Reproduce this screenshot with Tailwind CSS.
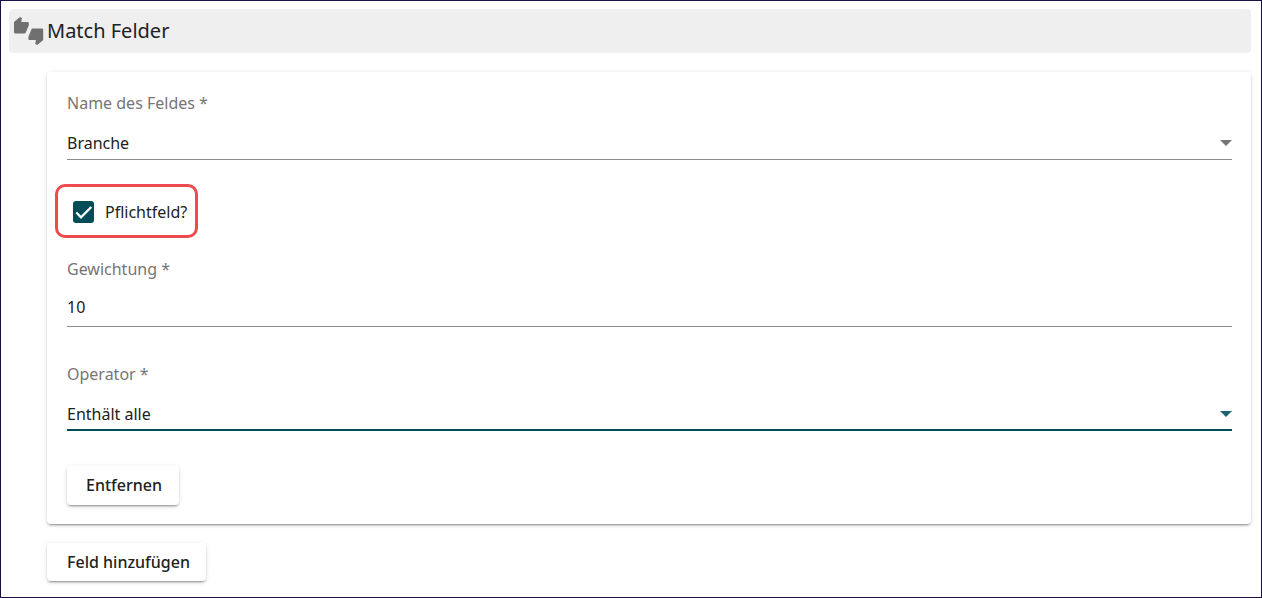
<!DOCTYPE html>
<html lang="de">
<head>
    <meta charset="UTF-8">
    <meta name="viewport" content="width=device-width, initial-scale=1.0">
    <title>Match Felder</title>
    <script src="https://cdn.jsdelivr.net/npm/@tailwindcss/browser@4"></script>
</head>
<body class="min-h-screen border border-[#1b0f45] bg-white pt-2 pr-2.5 pb-4 pl-2 font-['Noto_Sans',sans-serif] text-base text-[#212121]">

    <header class="flex h-11 items-center gap-[3px] rounded bg-[#efefef] pl-[5px]">
        <svg class="h-7 w-[30px] shrink-0 fill-[#707070]" viewBox="0 0 30 28" aria-hidden="true">
            <path d="M0 5.600Q0 5 .5 4.500L6 0l1.900 1-.6 4h6.600q.9 0 .9.900v2.300L11.800 15.600q-.3.800-1.100.8H1.100Q0 16.400 0 15.300z"/>
            <path d="M29.200 22.400q0 .6-.5 1.100L23.200 28l-1.900-1 .6-4h-6.600q-.9 0-.9-.9v-2.300l3-7.400q.3-.8 1.100-.8h9.600q1.100 0 1.100 1.100z"/>
        </svg>
        <h1 class="text-xl">Match Felder</h1>
    </header>

    <main class="ml-[38px]">
        <form id="match-field" class="mt-[19px] rounded bg-white pt-[19px] pr-[19px] pb-[19px] pl-5 shadow-[0_3px_1px_-2px_rgba(0,0,0,0.2),0_2px_2px_0_rgba(0,0,0,0.14),0_1px_5px_0_rgba(0,0,0,0.12)]">

            <label for="name" class="block h-6 text-[#757575]">Name des Feldes *</label>
            <div class="relative mt-3">
                <select id="name" name="name" required class="block h-[33px] w-full appearance-none border-b border-[#8c8c8c] bg-transparent pr-6 pb-px outline-none">
                    <option>Branche</option>
                </select>
                <svg class="pointer-events-none absolute top-[13px] right-0 h-1.5 w-3 fill-[#757575]" viewBox="0 0 12 6" aria-hidden="true"><path d="M0 0h12L6 6z"/></svg>
            </div>

            <label for="required" class="mt-6 -ml-3 flex h-[54px] w-fit items-center gap-[11px] rounded-[10px] border-3 border-[#ee4b4f] pt-px pr-2 pl-[15px]">
                <span class="relative block">
                    <input type="checkbox" id="required" name="required" checked class="peer block h-[22px] w-[21px] appearance-none rounded-[3px] border-2 border-[#757575] checked:border-[#004d57] checked:bg-[#004d57]">
                    <svg class="pointer-events-none absolute inset-0 hidden h-[22px] w-[21px] fill-none stroke-white stroke-[2.3] peer-checked:block" viewBox="0 0 21 22" aria-hidden="true"><path d="M3.300 11.500l4.700 4.800L18.300 6"/></svg>
                </span>
                Pflichtfeld?
            </label>

            <label for="weight" class="mt-[19px] block h-6 text-[#757575]">Gewichtung *</label>
            <input type="text" inputmode="numeric" id="weight" name="weight" value="10" required class="mt-2 block h-[38px] w-full border-b border-[#8c8c8c] pb-0.5 outline-none">

            <label for="operator" class="mt-[35px] block h-6 text-[#757575]">Operator *</label>
            <div class="relative mt-3">
                <select id="operator" name="operator" required class="block h-[33px] w-full appearance-none border-b-2 border-[#004d57] bg-transparent pr-6 outline-none">
                    <option>Enthält alle</option>
                </select>
                <svg class="pointer-events-none absolute top-[13px] right-0 h-1.5 w-3 fill-[#1a656e]" viewBox="0 0 12 6" aria-hidden="true"><path d="M0 0h12L6 6z"/></svg>
            </div>

            <button type="button" class="mt-[35px] block h-[39px] rounded bg-white pr-[17px] pb-px pl-[19px] font-medium shadow-[0_3px_1px_-2px_rgba(0,0,0,0.2),0_2px_2px_0_rgba(0,0,0,0.14),0_1px_5px_0_rgba(0,0,0,0.12)]">Entfernen</button>
        </form>

        <button type="button" class="mt-[19px] block h-[38px] rounded bg-white pr-4 pl-5 font-medium shadow-[0_3px_1px_-2px_rgba(0,0,0,0.2),0_2px_2px_0_rgba(0,0,0,0.14),0_1px_5px_0_rgba(0,0,0,0.12)]">Feld hinzufügen</button>
    </main>

</body>
</html>
